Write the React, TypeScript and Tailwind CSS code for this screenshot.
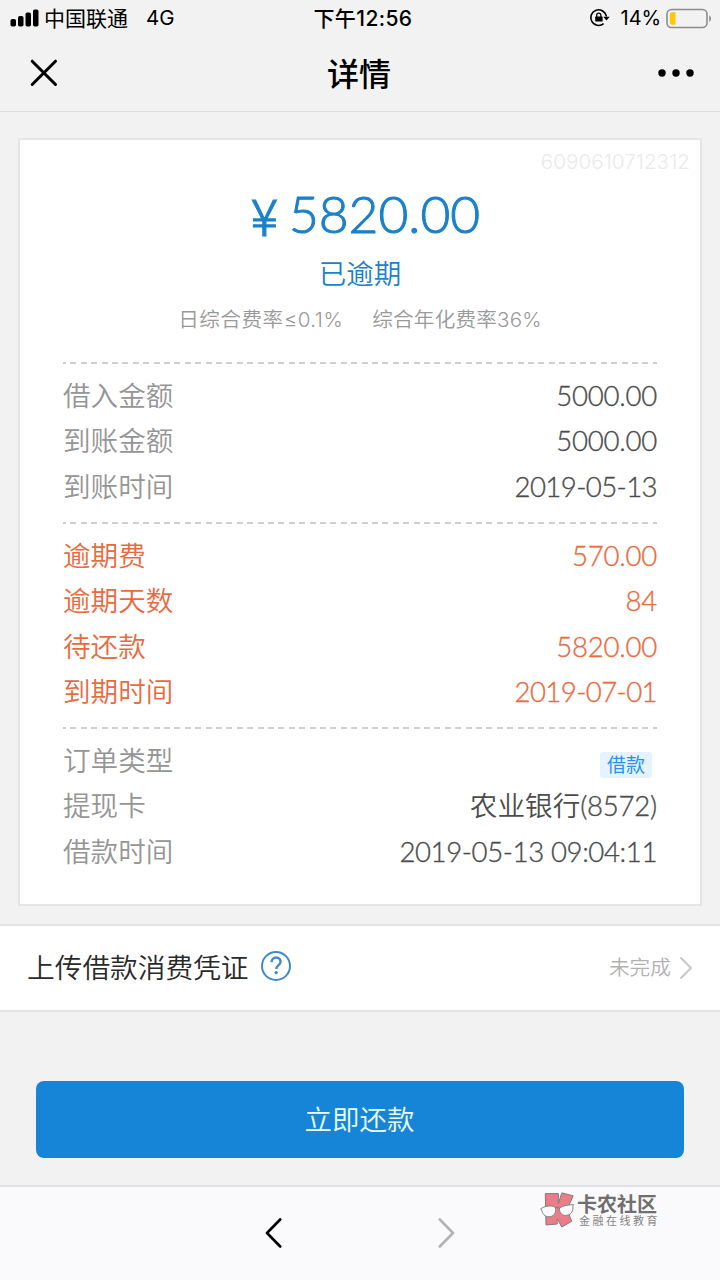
import React from "react";

type Tone = "muted" | "alert";

interface RowProps {
  label: string;
  tone?: Tone;
  children: React.ReactNode;
}

function Row({ label, tone = "muted", children }: RowProps) {
  const alert = tone === "alert";
  return (
    <div className="flex h-[45.33px] items-center justify-between whitespace-nowrap">
      <span className={alert ? "text-[#ea6a3e]" : "text-[#959595]"}>{label}</span>
      <span className={alert ? "text-[#ea6a3e]" : "text-[#4c4c4c]"}>{children}</span>
    </div>
  );
}

function Num({ children }: { children: string }) {
  return <span className="tracking-[-0.25px] [-webkit-text-stroke:0.35px]">{children}</span>;
}

function DateText({ children }: { children: string }) {
  return <span className="tracking-[-0.6px] [-webkit-text-stroke:0.35px]">{children}</span>;
}

function Section({ children }: { children: React.ReactNode }) {
  return (
    <section className="pb-[13px]">
      <div className="h-[2px] bg-[repeating-linear-gradient(90deg,#cfcfcf_0px,#cfcfcf_6px,transparent_6px,transparent_10.4px)] bg-[position:-3px_0]" />
      <div className="pt-[9px]">{children}</div>
    </section>
  );
}

function StatusBar() {
  return (
    <div className="grid h-9 grid-cols-3 items-center pr-[8px] pl-[10px] font-['Inter','Noto_Sans_CJK_SC',sans-serif] text-[20px] leading-none text-black">
      <div className="flex items-center whitespace-nowrap">
        <svg width="29" height="18" viewBox="0 0 29 18" className="shrink-0">
          <rect x="0.5" y="10" width="5.5" height="7.5" rx="1.8" />
          <rect x="8" y="7" width="5.5" height="10.5" rx="1.8" />
          <rect x="15.5" y="3.5" width="5.5" height="14" rx="1.8" />
          <rect x="23" y="0.5" width="5.5" height="17" rx="1.8" />
        </svg>
        <span className="ml-[5px] text-[21px]">中国联通</span>
        <span className="ml-[18px] text-[20.5px]">4G</span>
      </div>
      <div className="pl-[4px] text-center text-[21px] font-medium tracking-[0.4px] whitespace-nowrap">下午12:56</div>
      <div className="flex items-center justify-end">
        <svg width="22" height="20" viewBox="0 0 22 20" fill="none">
          <path d="M17.3 8.5A7.8 7.8 0 1 0 14.6 15.6" stroke="#000" strokeWidth="1.6" />
          <path d="M14.3 8.8h6.4l-3.2 3.8z" fill="#000" />
          <rect x="6.2" y="8.6" width="7.4" height="5" rx="0.6" fill="#000" />
          <path d="M7.7 9V7.3a2.1 2.1 0 0 1 4.2 0V9" stroke="#000" strokeWidth="1.3" />
        </svg>
        <span className="ml-[10px] tracking-[-0.1px]">14%</span>
        <svg width="46" height="21" viewBox="0 0 46 21" fill="none" className="ml-[5px]">
          <rect x="1" y="1.5" width="40" height="18" rx="4.5" stroke="#8c8c8c" strokeWidth="1.6" />
          <path d="M6 4.2h3.5v12.6H6a2.2 2.2 0 0 1-2.2-2.2V6.4A2.2 2.2 0 0 1 6 4.2z" fill="#fdc70c" />
          <path d="M43.2 7.2c2.4 1.4 2.4 5.2 0 6.6z" fill="#8c8c8c" />
        </svg>
      </div>
    </div>
  );
}

function NavBar() {
  return (
    <header className="grid h-[76px] grid-cols-3 items-center border-b border-[#dedede] px-[26px]">
      <svg width="28" height="28" viewBox="0 0 28 28" fill="none" stroke="#000" strokeWidth="3" strokeLinecap="round" className="mb-px ml-1">
        <path d="M2.2 2.2 25.5 25.5M25.5 2.2 2.2 25.5" />
      </svg>
      <h1 className="pt-px pr-[2px] text-center text-[32px] leading-none font-medium text-black">详情</h1>
      <svg width="36" height="8" viewBox="0 0 36 8" className="mb-[2px] justify-self-end">
        <circle cx="4" cy="4" r="3.7" />
        <circle cx="18" cy="4" r="3.7" />
        <circle cx="32" cy="4" r="3.7" />
      </svg>
    </header>
  );
}

function CommunityLogo() {
  return (
    <div className="flex items-start opacity-90">
      <svg width="35" height="36" viewBox="0 0 35 36" fill="none">
        <path
          d="M5.3 1.6H18.3V11.5L21.8.9 33.2 3.8 27 17.5 31.7 29.3 21.8 35 17.2 26.5V32L6 33z"
          fill="#e9707c"
          stroke="#7d6a6c"
          strokeWidth="1"
          strokeLinejoin="round"
        />
        <path d="M.6 16.9c4.3-3 10.6-4 14.7-1.7 1.7 5.7-1.8 9.5-6.3 9.6-4.2 0-6.8-3-7.3-7z" fill="#fbfbfc" stroke="#777" strokeWidth="1" />
        <path d="M33.7 12.7c-4.5-.2-10.6.8-14.2 3.2-.4 5.6 3.2 8.2 7.6 7.4 4.3-.8 6.4-4.6 5.7-9.2z" fill="#fbfbfc" stroke="#777" strokeWidth="1" />
        <path d="M15.3 15.9q2-1.3 4.2.3" stroke="#777" strokeWidth="1.1" />
      </svg>
      <div className="ml-[2px] flex flex-col whitespace-nowrap">
        <span className="mt-px text-[20px] leading-[22px] font-bold text-[#606060]">卡农社区</span>
        <span className="ml-[2px] text-[11px] leading-[11px] tracking-[2.5px] text-[#777]">金融在线教育</span>
      </div>
    </div>
  );
}

export default function App() {
  return (
    <div className="flex h-[1280px] w-[720px] flex-col overflow-hidden bg-[#f2f2f2] font-['Lato','Noto_Sans_CJK_SC',sans-serif]">
      <StatusBar />
      <NavBar />

      <main className="flex flex-1 flex-col">
        <article className="mx-[18px] mt-[26px] h-[768px] border-2 border-[#e5e5e5] bg-white">
          <div className="pt-[11px] pr-[10px] text-right font-['Inter'] text-[20.7px] leading-[22px] font-light text-[#eaeaea]">
            6090610712312
          </div>
          <div className="mt-[11px] flex h-[60px] items-center justify-center pl-[10px] leading-none font-light text-[#1a81ca]">
            <span className="w-[30px] text-center font-['Noto_Sans_CJK_SC'] text-[51px] [-webkit-text-stroke:1.2px]">
              <span className="-ml-px">¥</span>
            </span>
            <span className="ml-[9px] text-[51.5px] [-webkit-text-stroke:1px]">5820.00</span>
          </div>
          <p className="mt-[12px] text-center text-[27.5px] leading-[36px] font-[350] text-[#1a81ca]">已逾期</p>
          <p className="mt-[14px] flex justify-center gap-[29px] font-['Inter','Noto_Sans_CJK_SC',sans-serif] text-[20.6px] leading-[28px] font-[350] whitespace-nowrap text-[#999]">
            <span className="tracking-[0.5px]">日综合费率≤0.1%</span>
            <span className="tracking-[0.2px]">综合年化费率36%</span>
          </p>
          <div className="mt-[28px] mr-[43px] ml-[43px] text-[27.6px] leading-none font-[350]">
            <Section>
              <Row label="借入金额"><Num>5000.00</Num></Row>
              <Row label="到账金额"><Num>5000.00</Num></Row>
              <Row label="到账时间"><DateText>2019-05-13</DateText></Row>
            </Section>
            <Section>
              <Row label="逾期费" tone="alert"><Num>570.00</Num></Row>
              <Row label="逾期天数" tone="alert"><Num>84</Num></Row>
              <Row label="待还款" tone="alert"><Num>5820.00</Num></Row>
              <Row label="到期时间" tone="alert"><DateText>2019-07-01</DateText></Row>
            </Section>
            <Section>
              <Row label="订单类型">
                <span className="mt-[8px] mr-[5px] flex h-[26px] w-[52px] items-center justify-center rounded-[3px] bg-[#e4f3fe] text-[19px] font-normal text-[#2b8ff0]">
                  借款
                </span>
              </Row>
              <Row label="提现卡">农业银行<Num>(8572)</Num></Row>
              <Row label="借款时间">
                <span className="tracking-[-0.4px] [-webkit-text-stroke:0.35px]">2019-05-13 09:04:11</span>
              </Row>
            </Section>
          </div>
        </article>

        <div className="mt-[18px] flex h-[88px] items-center border-y-2 border-[#e3e3e3] bg-white pr-[27px] pb-px pl-[27px]">
          <span className="text-[27.7px] leading-none font-[350] text-[#2a2a2a]">上传借款消费凭证</span>
          <svg width="30" height="30" viewBox="0 0 30 30" fill="none" stroke="#4089d0" className="mb-[3px] ml-[12px]">
            <circle cx="15" cy="15" r="14" strokeWidth="2" />
            <path d="M10.6 11.3c0-2.9 1.9-4.8 4.5-4.8s4.5 1.7 4.5 4.3c0 3.3-4.3 3.500-4.3 7.300" strokeWidth="2.4" />
            <circle cx="15.2" cy="21.6" r="1.7" fill="#4089d0" stroke="none" />
          </svg>
          <span className="ml-auto text-[20.7px] font-[350] text-[#b2b2b2]">未完成</span>
          <svg width="14" height="24" viewBox="0 0 14 24" fill="none" stroke="#c7c7cc" strokeWidth="2" className="ml-[8px]">
            <path d="M1.5 1.5 12 12 1.5 22.5" />
          </svg>
        </div>

        <button className="mx-9 mt-[69px] h-[77px] rounded-[8px] bg-[#1785d7] pr-px text-[27.5px] font-[350] text-[#e9ffff]">
          立即还款
        </button>
      </main>

      <footer className="relative flex h-[95px] items-center border-t-2 border-[#e1e1e2] bg-[#fafafc] pb-[2px]">
        <svg width="17" height="30" viewBox="0 0 17 30" fill="none" stroke="#000" strokeWidth="2.6" strokeLinecap="round" strokeLinejoin="round" className="ml-[265px]">
          <path d="M15.2 1.5 2 15l13.2 13.5" />
        </svg>
        <svg width="17" height="30" viewBox="0 0 17 30" fill="none" stroke="#b3b3b5" strokeWidth="2.6" strokeLinecap="round" strokeLinejoin="round" className="ml-[156px]">
          <path d="M1.8 1.5 15 15 1.8 28.5" />
        </svg>
        <div className="absolute top-[5px] left-[540px]">
          <CommunityLogo />
        </div>
      </footer>
    </div>
  );
}
